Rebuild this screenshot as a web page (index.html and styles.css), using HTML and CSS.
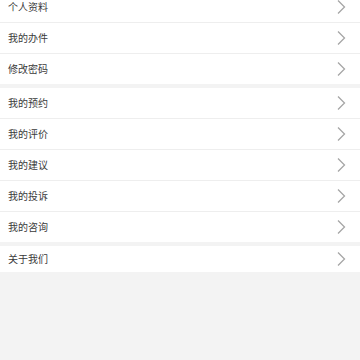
FILE: index.html
```html
<!DOCTYPE html>
<html lang="zh-CN">
<head>
    <meta charset="UTF-8">
    <meta name="viewport" content="width=device-width, initial-scale=1.0">
    <title>我的</title>
    <link rel="stylesheet" href="styles.css">
</head>
<body>
<div class="page">
    <div class="group">
        <div class="item row-box"><span class="label flex1">个人资料</span><svg class="arrow" viewBox="0 0 10 16"><path d="M2 1.5 L8.5 8 L2 14.5"/></svg></div>
        <div class="item row-box"><span class="label flex1">我的办件</span><svg class="arrow" viewBox="0 0 10 16"><path d="M2 1.5 L8.5 8 L2 14.5"/></svg></div>
        <div class="item row-box"><span class="label flex1">修改密码</span><svg class="arrow" viewBox="0 0 10 16"><path d="M2 1.5 L8.5 8 L2 14.5"/></svg></div>
    </div>
    <div class="group">
        <div class="item row-box"><span class="label flex1">我的预约</span><svg class="arrow" viewBox="0 0 10 16"><path d="M2 1.5 L8.5 8 L2 14.5"/></svg></div>
        <div class="item row-box"><span class="label flex1">我的评价</span><svg class="arrow" viewBox="0 0 10 16"><path d="M2 1.5 L8.5 8 L2 14.5"/></svg></div>
        <div class="item row-box"><span class="label flex1">我的建议</span><svg class="arrow" viewBox="0 0 10 16"><path d="M2 1.5 L8.5 8 L2 14.5"/></svg></div>
        <div class="item row-box"><span class="label flex1">我的投诉</span><svg class="arrow" viewBox="0 0 10 16"><path d="M2 1.5 L8.5 8 L2 14.5"/></svg></div>
        <div class="item row-box"><span class="label flex1">我的咨询</span><svg class="arrow" viewBox="0 0 10 16"><path d="M2 1.5 L8.5 8 L2 14.5"/></svg></div>
    </div>
    <div class="group last">
        <div class="item row-box"><span class="label flex1">关于我们</span><svg class="arrow" viewBox="0 0 10 16"><path d="M2 1.5 L8.5 8 L2 14.5"/></svg></div>
    </div>
</div>
</body>
</html>
```

FILE: styles.css
```css
html,body{margin: 0;padding: 0;}
body{background: #f3f3f3;font-family: "Noto Sans CJK SC","Noto Sans",sans-serif;height: 360px;overflow: hidden;}

.row-box{display: -webkit-flex;display: flex;flex-direction:row;flex-wrap: nowrap;align-items: center;}
.flex1{flex:1 1 auto;}

/* page is scrolled a little, first row cut off */
.page{margin-top: -8px;}

.group{background: #fff;margin-bottom: 4px;}
.group>.item{height: 30px;padding: 0 14px 0 8px;border-bottom: 1px solid #eeeeee;}
.group>.item:last-child{border-bottom: none;}
.group.last>.item{height: 26px;}

.label{font-size: 10px;color: #3a3a3a;line-height: 16px;}
.arrow{width: 10px;height: 16px;flex-shrink: 0;}
.arrow path{fill: none;stroke: #a6a6a6;stroke-width: 1.3;}
```
